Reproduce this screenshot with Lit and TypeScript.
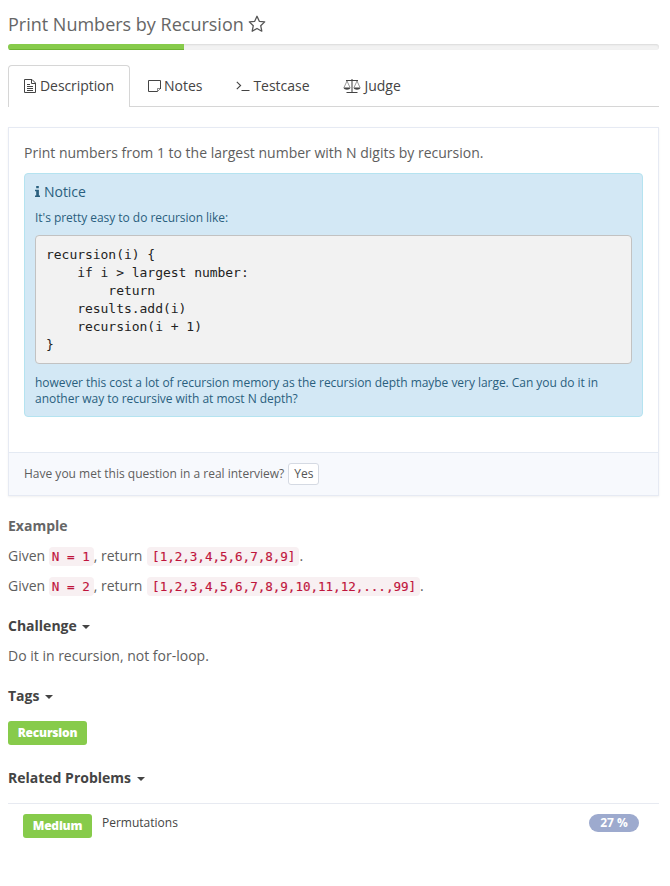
import { LitElement, html, css, svg } from "lit";
import { customElement } from "lit/decorators.js";

const icons = {
  star: svg`<svg class="star" width="18" height="18" viewBox="0 0 18 18" fill="none" stroke="currentColor" stroke-width="1.3" stroke-linejoin="round"><path d="M9 1.3 11.3 6.3 16.7 6.9 12.7 10.7 13.8 16.2 9 13.5 4.2 16.2 5.3 10.7 1.3 6.9 6.7 6.3Z"/></svg>`,
  file: svg`<svg width="12" height="14" viewBox="0 0 12 14" fill="none" stroke="currentColor"><path d="M.5 .5H8L11.5 4V13.5H.5ZM7.5 .5V4.5H11.5M3 5.5H6M3 7.5H9M3 9.5H9M3 11.5H9"/></svg>`,
  note: svg`<svg width="13" height="12" viewBox="0 0 13 12" fill="none" stroke="currentColor"><path d="M12.5 9V.5H.5V11.5H9.5"/><path d="M12.5 8.5 9.5 11.5V8.5Z" stroke-width=".8" opacity=".8"/></svg>`,
  prompt: svg`<svg width="14" height="12" viewBox="0 0 14 12" fill="none" stroke="currentColor"><path d="M.8 1.8 4.6 5.5.8 9.2" stroke-width="1.1"/><path d="M5.5 10.5H13.5"/></svg>`,
  scale: svg`<svg width="18" height="15" viewBox="0 0 18 15" fill="none" stroke="currentColor"><path d="M3 1.5H15M3.5 13.5H14.5"/><path d="M9 0V13.5" stroke-width="1.4" opacity=".75"/><path d="M4 2 1 8.5M4 2 7 8.5M14 2 11 8.5M14 2 17 8.5" stroke-width=".55"/><path d="M.5 8.5H7.5C7 11.5 1 11.5.5 8.5ZM10.5 8.5H17.5C17 11.5 11 11.5 10.5 8.5Z" fill="currentColor" stroke="none"/></svg>`,
  info: svg`<svg width="5" height="11" viewBox="0 0 5 11" fill="currentColor"><path d="M1.2 0H3.8V2.3H1.2ZM0 3.8H3.9V9.5H5V11H0V9.5H1.2V5.3H0Z"/></svg>`,
};

const snippet = `recursion(i) {
    if i > largest number:
        return
    results.add(i)
    recursion(i + 1)
}`;

const examples = [
  ["N = 1", "[1,2,3,4,5,6,7,8,9]"],
  ["N = 2", "[1,2,3,4,5,6,7,8,9,10,11,12,...,99]"],
];

@customElement("app-root")
export class AppRoot extends LitElement {
  static styles = css`
    :host { display: block; box-sizing: border-box; height: 886px; padding: 10px 11px 0 8px; background: #fff; color: #5e5e5e; font: 14px/20px "Open Sans", sans-serif; overflow: hidden; }
    * { box-sizing: border-box; }
    p, h1, h2, h3, pre { margin: 0; }
    svg { display: block; flex: none; }
    h1 { display: flex; align-items: center; height: 28px; font-size: 18px; font-weight: 400; line-height: 28px; color: #666; }
    .star { margin-left: 4px; color: #555; }
    .progress { margin-top: 6px; height: 6px; border-radius: 3px; background: #f2f2f2; box-shadow: inset 0 1px 2px rgba(0,0,0,.1); overflow: hidden; }
    .fill { height: 100%; width: 27%; background: #87cb4b; box-shadow: inset 0 -1px 0 #6eb334; }
    nav { display: flex; height: 42px; margin-top: 15px; border-bottom: 1px solid #d6d6d6; color: #444; }
    .tab { display: flex; align-items: center; height: 41px; padding: 0 15px; border: 1px solid transparent; border-bottom: 0; margin-right: 2px; gap: 3px; letter-spacing: -.02px; }
    .tab.on { width: 122px; height: 42px; gap: 4px; letter-spacing: -.07px; white-space: nowrap; border-color: #d6d6d6; border-radius: 4px 4px 0 0; background: #fff; padding-bottom: 1px; }
    .panel { margin-top: 20px; height: 369px; border: 1px solid #e6eaf3; box-shadow: 0 1px 2px rgba(0,0,0,.06); display: flex; flex-direction: column; }
    .body { flex: 1; padding: 15px 15px 0; }
    .notice { margin-top: 10px; height: 244px; padding: 7px 10px 0; border: 1px solid #b5e3f0; border-radius: 4px; background: #d3e8f5; color: #2a5f7e; font-size: 12px; line-height: 16px; letter-spacing: -.04px; }
    .notice h3 { display: flex; align-items: center; gap: 4px; font-size: 14px; line-height: 21px; font-weight: 400; }
    .lead { margin-top: 8px; }
    pre { height: 129px; margin: 9px 0 11px; padding: 10px; border: 1px solid #c2c2c2; border-radius: 4px; background: #f2f2f2; color: #222; font: 13px/18px "DejaVu Sans Mono", monospace; letter-spacing: -.03px; }
    footer { display: flex; align-items: center; height: 43px; padding: 0 15px; gap: 4px; border-top: 1px solid #e4eaf3; background: #f7f9fd; font-size: 12px; }
    .yes { height: 22px; padding: 0 5px; border: 1px solid #d5dae3; border-radius: 3px; background: #fff; color: #555; font: 12px/20px "Open Sans", sans-serif; }
    h2 { display: flex; align-items: center; gap: 5.6px; font-size: 14px; line-height: 20px; font-weight: 700; color: #444; }
    h2.plain { margin-top: 20px; color: #666; }
    .caret { width: 0; height: 0; border: 4px solid transparent; border-top-color: currentColor; border-bottom: 0; margin-top: 2px; }
    .example { margin-top: 10px; height: 20px; white-space: nowrap; }
    code { padding: 2px 4px 2px 3px; border-radius: 4px; background: #f8f0f2; color: #c0143c; font: 12.6px/15px "DejaVu Sans Mono", monospace; -webkit-text-stroke: .15px; }
    .result { margin-left: 1px; padding-left: 5px; padding-right: 4px; letter-spacing: -.04px; }
    .section { margin-top: 20px; }
    .text { margin-top: 10px; }
    .label { display: inline-flex; align-items: center; justify-content: center; height: 24px; border-radius: 3px; background: #87cb4b; color: #fff; font-size: 12px; font-weight: 800; letter-spacing: -.2px; }
    .tags { display: flex; margin: 15px 0 23px; }
    .tag { width: 79px; }
    .level { width: 69px; margin-top: 3px; }
    .problems { margin-top: 15px; border-top: 1px solid #e7eaf1; }
    .row { display: flex; align-items: flex-start; padding: 7px 20px 0 15px; font-size: 12px; color: #444; }
    .name { flex: 1; margin: 2px 0 0 10px; }
    .rate { width: 50px; height: 18px; margin-top: 3px; border-radius: 9px; background: #9daace; color: #fff; text-align: center; font-size: 12px; line-height: 18px; font-weight: 700; }
    .tags + .section { margin-top: 0; }
  `;

  private tab(icon: unknown, label: string, on = false) {
    return html`<div class="tab ${on ? "on" : ""}">${icon}<span>${label}</span></div>`;
  }

  private heading(label: string) {
    return html`<h2 class="section">${label}<i class="caret"></i></h2>`;
  }

  render() {
    return html`
      <h1><span>Print Numbers by Recursion</span>${icons.star}</h1>
      <div class="progress"><div class="fill"></div></div>
      <nav>
        ${this.tab(icons.file, "Description", true)}
        ${this.tab(icons.note, "Notes")}
        ${this.tab(icons.prompt, "Testcase")}
        ${this.tab(icons.scale, "Judge")}
      </nav>
      <section class="panel">
        <div class="body">
          <p>Print numbers from 1 to the largest number with N digits by recursion.</p>
          <div class="notice">
            <h3>${icons.info}<span>Notice</span></h3>
            <p class="lead">It's pretty easy to do recursion like:</p>
            <pre>${snippet}</pre>
            <p>however this cost a lot of recursion memory as the recursion depth maybe very large. Can you do it in another way to recursive with at most N depth?</p>
          </div>
        </div>
        <footer><span>Have you met this question in a real interview?</span><button class="yes">Yes</button></footer>
      </section>
      <h2 class="plain">Example</h2>
      ${examples.map(([n, r]) => html`<p class="example">Given <code>${n}</code>, return <code class="result">${r}</code>.</p>`)}
      ${this.heading("Challenge")}
      <p class="text">Do it in recursion, not for-loop.</p>
      ${this.heading("Tags")}
      <div class="tags"><span class="label tag">Recursion</span></div>
      ${this.heading("Related Problems")}
      <div class="problems">
        <div class="row"><span class="label level">Medium</span><span class="name">Permutations</span><span class="rate">27 %</span></div>
      </div>
    `;
  }
}
